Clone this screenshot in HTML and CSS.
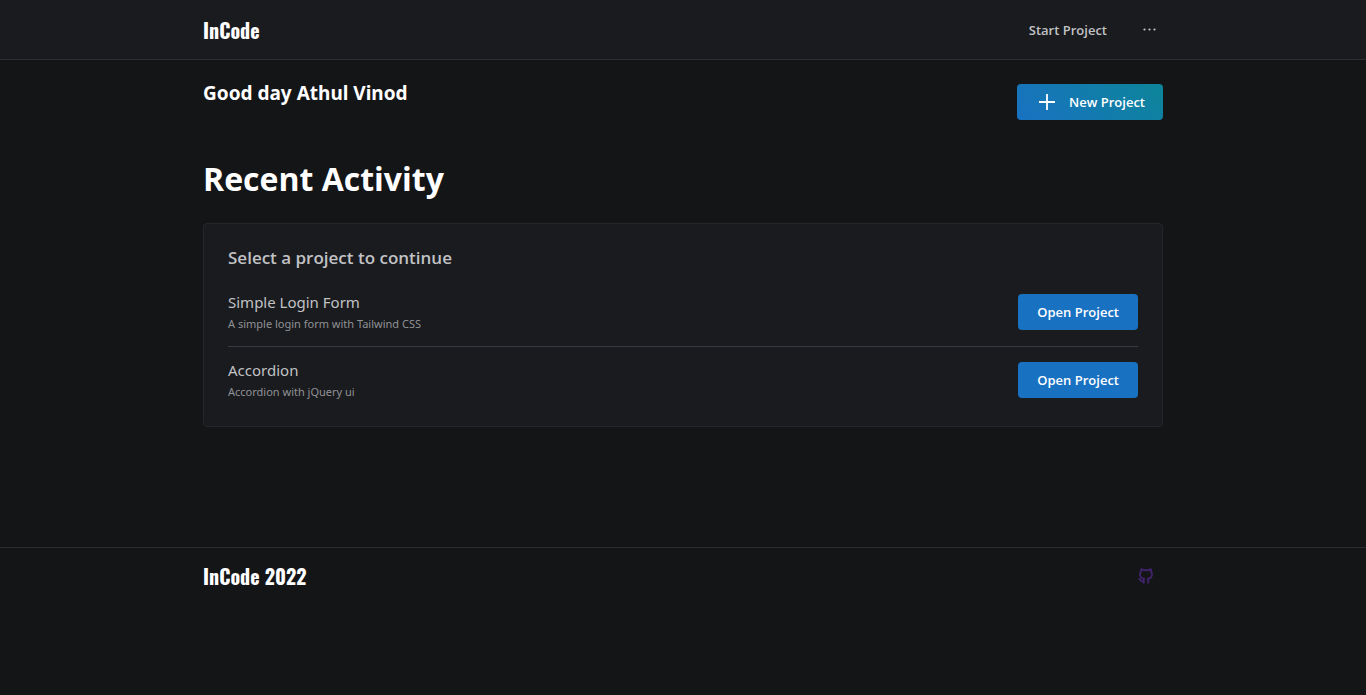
FILE: index.html
```html
<!DOCTYPE html>
<html lang="en">
<head>
<meta charset="utf-8">
<meta name="viewport" content="width=device-width, initial-scale=1">
<title>InCode</title>
<link rel="stylesheet" href="styles.css">
</head>
<body>
<header class="header">
  <div class="container header-inner">
    <a class="logo" href="#">InCode</a>
    <nav class="nav">
      <a class="nav-link" href="#">Start Project</a>
      <button class="icon-button" type="button" aria-label="More options">
        <svg width="16" height="16" viewBox="0 0 16 16" fill="currentColor" aria-hidden="true"><circle cx="3.500" cy="7.500" r="1.100"/><circle cx="8.500" cy="7.500" r="1.100"/><circle cx="13.500" cy="7.500" r="1.100"/></svg>
      </button>
    </nav>
  </div>
</header>
<main class="container main">
  <div class="greeting-row">
    <h2 class="greeting">Good day Athul Vinod</h2>
    <button class="button button-gradient" type="button">
      <svg width="20" height="20" viewBox="0 0 20 20" fill="none" stroke="currentColor" stroke-width="1.8" aria-hidden="true"><path d="M10 2v16M2 10h16"/></svg>
      <span>New Project</span>
    </button>
  </div>
  <h1 class="title">Recent Activity</h1>
  <section class="card">
    <h3 class="card-title">Select a project to continue</h3>
    <ul class="projects">
      <li class="project">
        <div>
          <p class="project-name">Simple Login Form</p>
          <p class="project-note">A simple login form with Tailwind CSS</p>
        </div>
        <button class="button" type="button">Open Project</button>
      </li>
      <li class="project">
        <div>
          <p class="project-name">Accordion</p>
          <p class="project-note">Accordion with jQuery ui</p>
        </div>
        <button class="button" type="button">Open Project</button>
      </li>
    </ul>
  </section>
</main>
<footer class="footer">
  <div class="container footer-inner">
    <span class="logo">InCode 2022</span>
    <a class="github" href="#" aria-label="GitHub">
      <svg width="18" height="18" viewBox="0 0 24 24" fill="none" stroke="currentColor" stroke-width="2.500" stroke-linecap="round" stroke-linejoin="round" aria-hidden="true"><path d="M9 19c-4.300 1.400-4.300-2.500-6-3m12 5v-3.500c0-1 .1-1.400-.5-2 2.800-.3 5.500-1.400 5.500-6a4.600 4.600 0 0 0-1.300-3.200 4.200 4.200 0 0 0-.1-3.200s-1.100-.3-3.500 1.300a12.300 12.300 0 0 0-6.200 0C6.500 2.800 5.400 3.100 5.400 3.100a4.200 4.200 0 0 0-.1 3.200A4.600 4.600 0 0 0 4 9.500c0 4.600 2.700 5.700 5.500 6-.6.600-.6 1.200-.5 2V21"/></svg>
    </a>
  </div>
</footer>
</body>
</html>
```
FILE: styles.css
```css
* {
  box-sizing: border-box;
}

body {
  margin: 0;
  background: #141517;
  color: #c1c2c5;
  font-family: "Segoe UI", "Open Sans", "Noto Sans", sans-serif;
  font-size: 14px;
  line-height: 20px;
}

h1, h2, h3, p, ul {
  margin: 0;
  padding: 0;
}

a {
  color: inherit;
  text-decoration: none;
}

.container {
  width: 100%;
  max-width: 960px;
  margin: 0 auto;
}

.header {
  background: #1a1b1e;
  border-bottom: 1px solid #2c2e33;
}

.header-inner {
  display: flex;
  align-items: center;
  justify-content: space-between;
  height: 59px;
}

.logo {
  color: #fff;
  font-family: Oswald, "Liberation Sans Narrow", "DejaVu Sans Condensed", sans-serif;
  font-size: 20px;
  font-weight: 700;
  line-height: 28px;
}

.nav {
  display: flex;
  align-items: center;
  gap: 28px;
}

.nav-link {
  font-size: 13px;
  font-weight: 600;
}

.icon-button {
  display: grid;
  place-items: center;
  width: 28px;
  height: 28px;
  padding: 0;
  border: 0;
  background: none;
  color: #c1c2c5;
}

.main {
  padding: 24px 0 120px;
}

.greeting-row {
  display: flex;
  align-items: flex-start;
  justify-content: space-between;
}

.greeting {
  margin-top: -6px;
  color: #fff;
  font-family: "Segoe UI", "Noto Sans", sans-serif;
  font-size: 19px;
  font-weight: 700;
  line-height: 30px;
}

.button {
  display: flex;
  align-items: center;
  height: 36px;
  padding: 0 19px;
  border: 0;
  border-radius: 4px;
  background: #1971c2;
  color: #fff;
  font: inherit;
  font-size: 13px;
  font-weight: 600;
}

.button-gradient {
  gap: 12px;
  padding: 0 18px 0 20px;
  background: linear-gradient(45deg, #1971c2 0%, #0c8599 100%);
}

.title {
  margin: 37px 0 22px;
  color: #fff;
  font-size: 32px;
  font-weight: 700;
  line-height: 44px;
}

.card {
  padding: 20px 24px 24px;
  border: 1px solid #25262b;
  border-radius: 4px;
  background: #1a1b1e;
}

.card-title {
  font-size: 17px;
  font-weight: 600;
  line-height: 28px;
}

.projects {
  margin-top: 18px;
  list-style: none;
}

.project {
  display: flex;
  align-items: center;
  justify-content: space-between;
}

.project + .project {
  margin-top: 12px;
  padding-top: 11px;
  border-top: 1px solid #373a40;
}

.project-name {
  font-family: "Segoe UI", "Noto Sans", sans-serif;
  font-size: 15px;
  line-height: 24px;
}

.project-note {
  color: #909296;
  font-family: "Segoe UI", "Noto Sans", sans-serif;
  font-size: 11px;
  line-height: 20px;
}

.footer {
  border-top: 1px solid #2c2e33;
}

.footer-inner {
  display: flex;
  align-items: center;
  justify-content: space-between;
  padding: 14px 0;
}

.github {
  display: flex;
  margin-right: 8px;
  color: #40236b;
}
```
